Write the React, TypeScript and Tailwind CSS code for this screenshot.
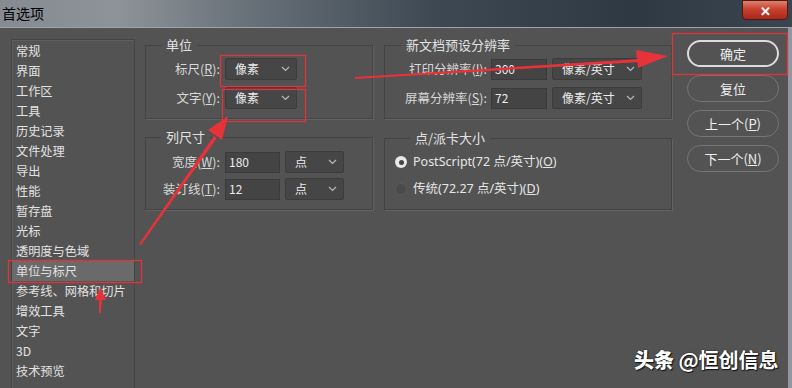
import React from "react";

const font = { fontFamily: '"Noto Sans CJK SC", "Noto Sans", sans-serif' };

const U = ({ c }: { c: string }) => <span className="underline">{c}</span>;

function Select({ text, w }: { text: string; w: string }) {
  return (
    <div className={`${w} h-[22px] bg-[#464646] border border-[#3c3c3c] rounded-[2px] flex items-center justify-between pl-[9px] pr-[6px] text-[#ececec]`}>
      <span>{text}</span>
      <svg width="9" height="6" viewBox="0 0 9 6"><path d="M1 1 L4.5 4.5 L8 1" stroke="#b8b8b8" strokeWidth="1.2" fill="none" /></svg>
    </div>
  );
}

function Input({ text, w }: { text: string; w: string }) {
  return (
    <div className={`${w} h-[21px] bg-[#444444] border border-[#3a3a3a] flex items-center pl-[3px] text-[#ececec]`}>{text}</div>
  );
}

function Btn({ children, primary }: { children: React.ReactNode; primary?: boolean }) {
  return (
    <div className={`w-[92px] h-[27px] rounded-full flex items-center justify-center text-[#eeeeee] ${primary ? "border-2 border-[#dcdcdc]" : "border border-[#767676]"}`}>
      {children}
    </div>
  );
}

const items = ["常规", "界面", "工作区", "工具", "历史记录", "文件处理", "导出", "性能", "暂存盘", "光标", "透明度与色域", "单位与标尺", "参考线、网格和切片", "增效工具", "文字", "3D", "技术预览"];

export default function App() {
  return (
    <div className="relative w-[792px] h-[388px] overflow-hidden bg-[#535353] text-[12px] leading-none" style={font}>
      {/* title bar */}
      <div className="h-[28px] flex items-start justify-between bg-[linear-gradient(to_right,#858b91_0%,#8d9398_15%,#6b737b_30%,#3d4852_55%,#2e3943_80%,#3a4550_100%)] border-b border-[#9ea4aa]">
        <div className="pl-[2px] pt-[6px] text-[14px] text-black">首选项</div>
        <div className="mr-[4px] w-[46px] h-[20px] rounded-b-[4px] border border-[#4a1a14] bg-[linear-gradient(to_bottom,#e0806e_0%,#c9412f_45%,#a8281a_100%)] flex items-center justify-center text-white font-bold text-[13px]">✕</div>
      </div>

      <div className="flex h-[360px] pt-[11px] border-r-[4px] border-[#8e99a3]">
        {/* sidebar */}
        <div className="ml-[11px] w-[124px] h-[360px] border border-[#444] shadow-[inset_1px_1px_0_#5e5e5e] pt-[1px] text-[12.2px] text-[#e2e2e2]">
          {items.map((it) => (
            <div key={it} className={`h-[20px] flex items-center pl-[4px] ${it === "单位与标尺" ? "bg-[#6a6a6a]" : ""}`}>{it}</div>
          ))}
        </div>

        {/* left column */}
        <div className="ml-[10px] w-[228px] -mt-[2px] flex flex-col">
          <fieldset className="border border-[#444] shadow-[1px_1px_0_#626262] h-[82px] px-0 pt-[5px]">
            <legend className="ml-[15px] px-[5px] text-[13px] text-[#e2e2e2] leading-[16px]">单位</legend>
            <div className="flex items-center h-[22px]">
              <div className="w-[74px] text-right text-[#d8d8d8] text-[12.5px]">标尺(<U c="R" />):</div>
              <div className="ml-[5px]"><Select text="像素" w="w-[72px]" /></div>
            </div>
            <div className="flex items-center h-[22px] mt-[7px]">
              <div className="w-[74px] text-right text-[#d8d8d8] text-[12.5px]">文字(<U c="Y" />):</div>
              <div className="ml-[5px]"><Select text="像素" w="w-[72px]" /></div>
            </div>
          </fieldset>
          <fieldset className="mt-[10px] border border-[#444] shadow-[1px_1px_0_#626262] h-[81px] px-0 pt-[6px]">
            <legend className="ml-[15px] px-[5px] text-[13px] text-[#e2e2e2] leading-[16px]">列尺寸</legend>
            <div className="flex items-center h-[22px]">
              <div className="w-[74px] text-right text-[#d8d8d8] text-[12.5px]">宽度(<U c="W" />):</div>
              <div className="ml-[5px]"><Input text="180" w="w-[55px]" /></div>
              <div className="ml-[5px]"><Select text="点" w="w-[59px]" /></div>
            </div>
            <div className="flex items-center h-[22px] mt-[5px]">
              <div className="w-[74px] text-right text-[#d8d8d8] text-[12.5px]">装订线(<U c="T" />):</div>
              <div className="ml-[5px]"><Input text="12" w="w-[55px]" /></div>
              <div className="ml-[5px]"><Select text="点" w="w-[59px]" /></div>
            </div>
          </fieldset>
        </div>

        {/* right column */}
        <div className="ml-[11px] w-[288px] -mt-[2px] flex flex-col">
          <fieldset className="border border-[#444] shadow-[1px_1px_0_#626262] h-[82px] px-0 pt-[5px]">
            <legend className="ml-[16px] px-[5px] text-[13px] text-[#e2e2e2] leading-[16px]">新文档预设分辨率</legend>
            <div className="flex items-center h-[22px]">
              <div className="w-[102px] text-right text-[#d8d8d8] text-[12.5px]">打印分辨率(<U c="I" />):</div>
              <div className="ml-[4px]"><Input text="300" w="w-[56px]" /></div>
              <div className="ml-[5px]"><Select text="像素/英寸" w="w-[90px]" /></div>
            </div>
            <div className="flex items-center h-[22px] mt-[7px]">
              <div className="w-[102px] text-right text-[#d8d8d8] text-[12.5px]">屏幕分辨率(<U c="S" />):</div>
              <div className="ml-[4px]"><Input text="72" w="w-[56px]" /></div>
              <div className="ml-[5px]"><Select text="像素/英寸" w="w-[90px]" /></div>
            </div>
          </fieldset>
          <fieldset className="mt-[11px] border border-[#444] shadow-[1px_1px_0_#626262] h-[80px] px-0 pt-[7px] pl-[10px]">
            <legend className="ml-[15px] px-[5px] text-[13px] text-[#e2e2e2] leading-[16px]">点/派卡大小</legend>
            <div className="flex items-center h-[18px] text-[#e6e6e6] text-[12.5px]">
              <div className="w-[12px] h-[12px] rounded-full bg-[#e8e8e8] flex items-center justify-center"><div className="w-[5px] h-[5px] rounded-full bg-[#444]" /></div>
              <span className="ml-[6px]" style={{ fontFamily: '"Noto Sans", "Noto Sans CJK SC", sans-serif' }}>PostScript(72 点/英寸)(<U c="O" />)</span>
            </div>
            <div className="flex items-center h-[18px] mt-[9px] text-[#e6e6e6] text-[12.5px]">
              <div className="w-[12px] h-[12px] rounded-full bg-[#4a4a4a] border border-[#5a5a5a]" />
              <span className="ml-[6px]" style={{ fontFamily: '"Noto Sans", "Noto Sans CJK SC", sans-serif' }}>传统(72.27 点/英寸)(<U c="D" />)</span>
            </div>
          </fieldset>
        </div>

        {/* buttons */}
        <div className="ml-[15px] pt-[1px] flex flex-col gap-[8px] text-[13px]">
          <Btn primary>确定</Btn>
          <Btn>复位</Btn>
          <Btn>上一个(<U c="P" />)</Btn>
          <Btn>下一个(<U c="N" />)</Btn>
        </div>
      </div>

      {/* annotation overlay */}
      <svg className="absolute left-0 top-0" width="792" height="388" viewBox="0 0 792 388">
        <g fill="none" stroke="#e0343c" strokeWidth="1.3">
          <rect x="8.5" y="260.5" width="133" height="22" />
          <rect x="220.5" y="55.5" width="85" height="31" />
          <rect x="222.5" y="89.5" width="83" height="32" />
          <rect x="672.5" y="33.5" width="115" height="41" />
        </g>
        <path d="M139 244 L214 136 L217 138 L141 245 Z" fill="#e8323a" />
        <path d="M228 116 L208 130 L222 140 Z" fill="#e8323a" />
        <path d="M355 77 L640 59 L640 62 L355 79 Z" fill="#e8323a" />
        <path d="M668 56 L636 50 L638 68 Z" fill="#e8323a" />
        <path d="M99 313 L99 298 L102 298 L101 313 Z" fill="#e8323a" />
        <path d="M100.5 287 L95 300 L106 300 Z" fill="#e8323a" />
      </svg>

      <div className="absolute left-[634px] top-[350px] text-[20px] text-white [text-shadow:1px_1px_1px_#111,0_0_2px_#222] whitespace-nowrap">
        <span className="font-black">头条</span> <span className="font-semibold">@恒创信息</span>
      </div>
    </div>
  );
}
